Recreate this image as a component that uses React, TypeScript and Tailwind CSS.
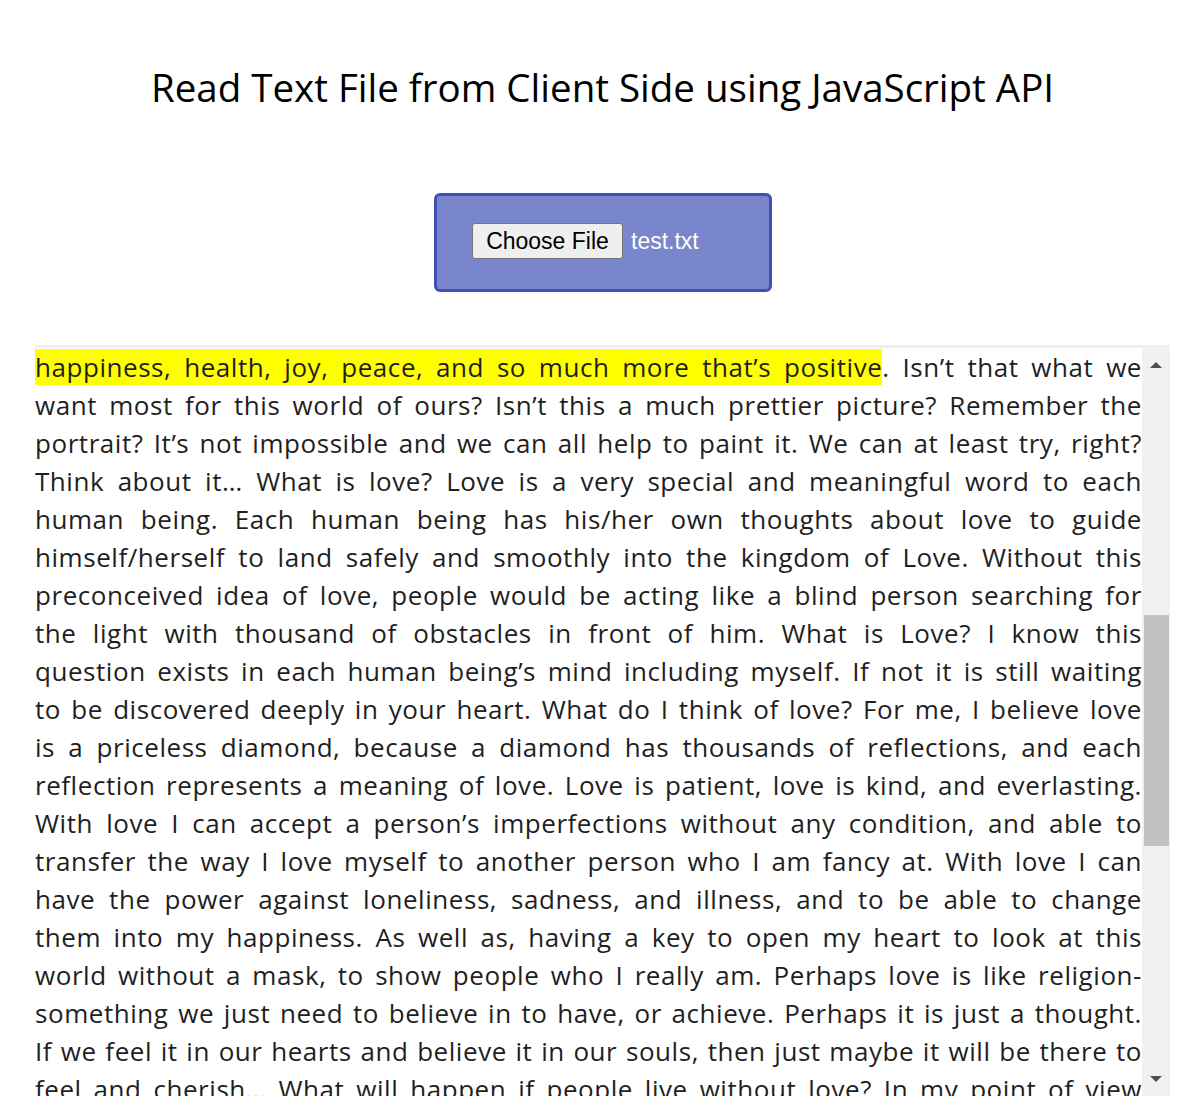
import React from "react";

const lines: React.ReactNode[] = [
  <>
    <span className="bg-[#ffff00]">happiness, health, joy, peace, and so much more that’s positive</span>. Isn’t that what we
  </>,
  "want most for this world of ours? Isn’t this a much prettier picture? Remember the",
  "portrait? It’s not impossible and we can all help to paint it. We can at least try, right?",
  "Think about it… What is love? Love is a very special and meaningful word to each",
  "human being. Each human being has his/her own thoughts about love to guide",
  "himself/herself to land safely and smoothly into the kingdom of Love. Without this",
  "preconceived idea of love, people would be acting like a blind person searching for",
  "the light with thousand of obstacles in front of him. What is Love? I know this",
  "question exists in each human being’s mind including myself. If not it is still waiting",
  "to be discovered deeply in your heart. What do I think of love? For me, I believe love",
  "is a priceless diamond, because a diamond has thousands of reflections, and each",
  "reflection represents a meaning of love. Love is patient, love is kind, and everlasting.",
  "With love I can accept a person’s imperfections without any condition, and able to",
  "transfer the way I love myself to another person who I am fancy at. With love I can",
  "have the power against loneliness, sadness, and illness, and to be able to change",
  "them into my happiness. As well as, having a key to open my heart to look at this",
  "world without a mask, to show people who I really am. Perhaps love is like religion-",
  "something we just need to believe in to have, or achieve. Perhaps it is just a thought.",
  "If we feel it in our hearts and believe it in our souls, then just maybe it will be there to",
  "feel and cherish…  What will happen if people live without love? In my point of view",
];

export default function App() {
  return (
    <div className="min-h-[1116px] bg-white pl-[35px] pr-[29px] pt-[60px] font-['Open_Sans',sans-serif]">
      <h1 className="text-center text-[38.5px] font-medium leading-[54px] text-black">
        Read Text File from Client Side using JavaScript API
      </h1>

      <div className="mt-[79px] flex justify-center pl-[1px]">
        <div className="flex h-[99px] w-[338px] items-center rounded-[6px] border-[3px] border-[#3f51b5] bg-[#7986cb] pl-[35px]">
          <div className="mb-[3px] flex items-center font-['Liberation_Sans',Arial,sans-serif] text-[23px]">
            <span className="flex h-[36px] w-[151px] items-center justify-center rounded-[3px] border border-[#767676] bg-[#efefef] text-black">
              Choose File
            </span>
            <span className="ml-[8px] text-white">test.txt</span>
          </div>
        </div>
      </div>

      <div className="mt-[53px] flex h-[751px] overflow-hidden border-t-[3px] border-[#efefef]">
        <div className="min-w-0 flex-1 overflow-hidden bg-white text-[26px] tracking-[0.55px] text-[#1f1f1f]">
          {lines.map((l, i) => (
            <div
              key={i}
              className="h-[38px] whitespace-nowrap text-justify leading-[38px] [text-align-last:justify]"
            >
              {l}
            </div>
          ))}
        </div>
        <div className="flex w-[28px] shrink-0 flex-col bg-[#f1f1f1]">
          <div className="flex h-[34px] items-center justify-center">
            <div className="h-0 w-0 border-x-[6px] border-b-[6px] border-x-transparent border-b-[#505050]" />
          </div>
          <div className="ml-[2px] mr-[1px] mt-[233px] h-[231px] bg-[#c1c1c1]" />
          <div className="flex-1" />
          <div className="flex h-[34px] items-center justify-center">
            <div className="h-0 w-0 border-x-[6px] border-t-[6px] border-x-transparent border-t-[#505050]" />
          </div>
        </div>
      </div>
    </div>
  );
}
